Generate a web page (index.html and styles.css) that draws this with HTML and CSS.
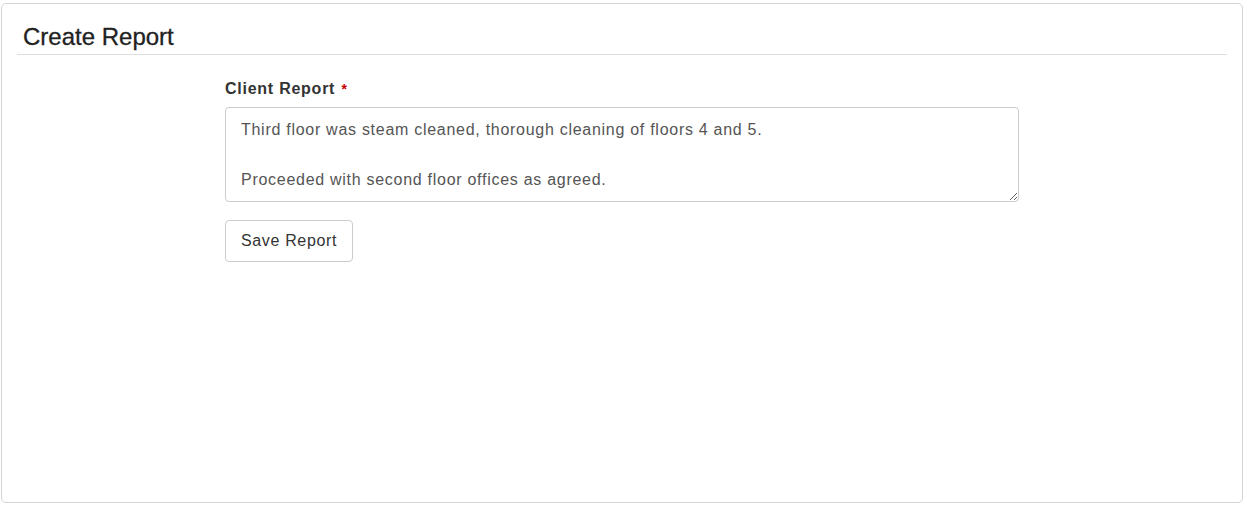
FILE: index.html
```html
<!DOCTYPE html>
<html>
<head>
<meta charset="utf-8">
<link rel="stylesheet" href="styles.css">
</head>
<body>
<div class="panel">
  <div class="panel-head">
    <h3 class="title">Create Report</h3>
  </div>
  <div class="form">
    <label class="label" for="report">Client Report <span class="req">*</span></label>
    <textarea id="report" class="textarea">Third floor was steam cleaned, thorough cleaning of floors 4 and 5.

Proceeded with second floor offices as agreed.</textarea>
    <button class="btn">Save Report</button>
  </div>
</div>
</body>
</html>
```
FILE: styles.css
```css
html, body {
  margin: 0;
  padding: 0;
  background: #fff;
}
body {
  font-family: "Liberation Sans", Arial, sans-serif;
  color: #333;
  padding: 3px 3px 2px 1px;
}
.panel {
  box-sizing: border-box;
  width: 1242px;
  height: 500px;
  border: 1px solid #d4d4d4;
  border-radius: 5px;
  padding: 0 15px;
}
.panel-head {
  border-bottom: 1px solid #dedede;
  padding: 19px 0 0 6px;
  height: 31px;
}
.title {
  margin: 0;
  font-size: 24px;
  font-weight: normal;
  line-height: 28px;
  color: #222;
  -webkit-text-stroke: 0.3px #222;
}
.form {
  padding: 24px 0 0 208px;
  display: flex;
  flex-direction: column;
  align-items: flex-start;
}
.label {
  font-size: 16px;
  font-weight: bold;
  line-height: 20px;
  letter-spacing: 0.75px;
  margin-bottom: 8px;
}
.req {
  color: #c00;
  font-size: 14px;
  margin-left: 1px;
}
.textarea {
  box-sizing: border-box;
  width: 794px;
  height: 95px;
  border: 1px solid #ccc;
  border-radius: 4px;
  padding: 9px 15px;
  font-family: "Liberation Sans", Arial, sans-serif;
  font-size: 16px;
  line-height: 25px;
  letter-spacing: 0.72px;
  color: #555;
  resize: vertical;
  margin: 0 0 18px 0;
}
.btn {
  box-sizing: border-box;
  height: 42px;
  padding: 0 15px;
  background: #fff;
  border: 1px solid #ccc;
  border-radius: 4px;
  font-family: "Liberation Sans", Arial, sans-serif;
  font-size: 16px;
  letter-spacing: 0.65px;
  color: #333;
}
```
